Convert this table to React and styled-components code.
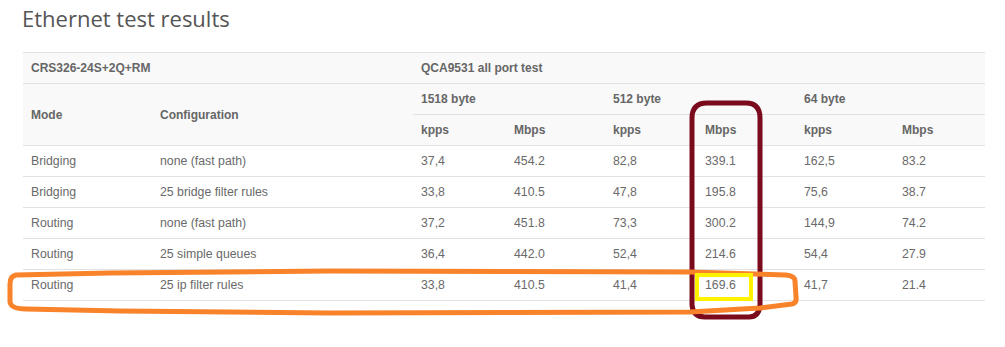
import styled, { createGlobalStyle } from "styled-components";

const GlobalStyle = createGlobalStyle`
  html, body {
    margin: 0;
    padding: 0;
    background: #fff;
  }
`

const Page = styled.div`
  position: relative;
  width: 1005px;
  height: 347px;
  padding: 4px 20px 0 23px;
  box-sizing: border-box;
  overflow: hidden;
`

const Title = styled.h1`
  margin: 0 0 20px -1px;
  font-family: "Open Sans", sans-serif;
  font-weight: 400;
  font-size: 22px;
  line-height: 28px;
  color: #555;
`

const Table = styled.table`
  width: 962px;
  border-collapse: collapse;
  table-layout: fixed;
  font-family: "Liberation Sans", Arial, sans-serif;
  color: #666;
`

const Head = styled.th`
  height: 30px;
  padding: 0 8px;
  text-align: left;
  font-size: 12px;
  font-weight: 700;
  background: #f9f9f9;
  border-top: 1px solid #e2e2e2;
  border-bottom: 1px solid #e2e2e2;
  color: #666;
`

const Cell = styled.td`
  height: 30px;
  padding: 0 8px;
  font-size: 12.3px;
  border-bottom: 1px solid #e2e2e2;
  color: #6a6a6a;
`

const Marks = styled.svg`
  position: absolute;
  left: 0;
  top: 0;
  pointer-events: none;
`

const widths = [129, 261, 93, 99, 92, 99, 98, 91]

const rows = [
  ["Bridging", "none (fast path)", "37,4", "454.2", "82,8", "339.1", "162,5", "83.2"],
  ["Bridging", "25 bridge filter rules", "33,8", "410.5", "47,8", "195.8", "75,6", "38.7"],
  ["Routing", "none (fast path)", "37,2", "451.8", "73,3", "300.2", "144,9", "74.2"],
  ["Routing", "25 simple queues", "36,4", "442.0", "52,4", "214.6", "54,4", "27.9"],
  ["Routing", "25 ip filter rules", "33,8", "410.5", "41,4", "169.6", "41,7", "21.4"],
]

const Annotations = () => (
  <Marks width="1005" height="347" viewBox="0 0 1005 347">
    <path
      d="M 692 305 L 692 118 Q 692 103 707 103 L 746 103 Q 760 103 760 118 L 760 305 Q 759 317 749 317 L 705 317 Q 693 317 692 305 Z"
      fill="none"
      stroke="#7b0a1c"
      strokeWidth="5"
      strokeLinejoin="round"
    />
    <path
      d="M 16 275 Q 10 276 10 284 L 10 302 Q 11 309 26 309 L 120 311 L 330 313 L 690 312 L 760 308 L 792 304 Q 797 303 796 297 L 795 281 Q 795 276 786 275 L 690 272 L 330 271 L 110 273 Z"
      fill="none"
      stroke="#f8832a"
      strokeWidth="5"
      strokeLinejoin="round"
    />
    <rect x="697" y="275" width="54" height="24" fill="none" stroke="#fff200" strokeWidth="4" />
  </Marks>
)

const App = () => {
  return (
    <>
      <GlobalStyle />
      <Page>
        <Title>Ethernet test results</Title>
        <Table>
          <colgroup>
            {widths.map((w, i) => (
              <col key={i} style={{ width: w }} />
            ))}
          </colgroup>
          <thead>
            <tr>
              <Head colSpan={2}>CRS326-24S+2Q+RM</Head>
              <Head colSpan={6}>QCA9531 all port test</Head>
            </tr>
            <tr>
              <Head rowSpan={2}>Mode</Head>
              <Head rowSpan={2}>Configuration</Head>
              <Head colSpan={2}>1518 byte</Head>
              <Head colSpan={2}>512 byte</Head>
              <Head colSpan={2}>64 byte</Head>
            </tr>
            <tr>
              <Head>kpps</Head>
              <Head>Mbps</Head>
              <Head>kpps</Head>
              <Head>Mbps</Head>
              <Head>kpps</Head>
              <Head>Mbps</Head>
            </tr>
          </thead>
          <tbody>
            {rows.map((r, i) => (
              <tr key={i}>
                {r.map((v, j) => (
                  <Cell key={j}>{v}</Cell>
                ))}
              </tr>
            ))}
          </tbody>
        </Table>
        <Annotations />
      </Page>
    </>
  )
}

export default App;
